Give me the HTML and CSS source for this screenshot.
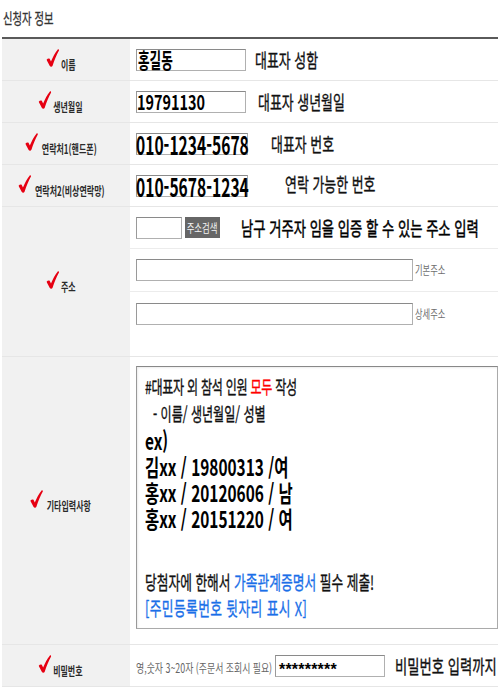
FILE: index.html
```html
<!DOCTYPE html>
<html lang="ko">
<head>
<meta charset="utf-8">
<title>신청자 정보</title>
<link rel="stylesheet" href="styles.css">
</head>
<body>
<div class="page">
  <div class="title"><span class="title-text">신청자 정보</span></div>
  <div class="table">

    <div class="row row-std">
      <div class="lab"><span class="lg"><svg class="chk" viewBox="0 0 12 17" preserveAspectRatio="none"><path d="M0.2 10.2C1.2 9 2.6 8.6 3.3 9.4L4.4 11.8C6.2 7.2 8.2 3.6 10.6 0.6C11.3 -0.1 12.3 0.6 11.9 1.5C9.8 5.4 7.6 10.4 5.9 15.8C5.5 17 3.9 17.1 3.3 16Z"/></svg><span class="lt">이름</span></span></div>
      <div class="val">
        <div class="field w110"><span class="fv v-name">홍길동</span></div>
        <span class="hint m9">대표자 성함</span>
      </div>
    </div>

    <div class="row row-std">
      <div class="lab"><span class="lg"><svg class="chk" viewBox="0 0 12 17" preserveAspectRatio="none"><path d="M0.2 10.2C1.2 9 2.6 8.6 3.3 9.4L4.4 11.8C6.2 7.2 8.2 3.6 10.6 0.6C11.3 -0.1 12.3 0.6 11.9 1.5C9.8 5.4 7.6 10.4 5.9 15.8C5.5 17 3.9 17.1 3.3 16Z"/></svg><span class="lt">생년월일</span></span></div>
      <div class="val">
        <div class="field w110"><span class="fv v-birth">19791130</span></div>
        <span class="hint m12">대표자 생년월일</span>
      </div>
    </div>

    <div class="row row-std">
      <div class="lab"><span class="lg"><svg class="chk" viewBox="0 0 12 17" preserveAspectRatio="none"><path d="M0.2 10.2C1.2 9 2.6 8.6 3.3 9.4L4.4 11.8C6.2 7.2 8.2 3.6 10.6 0.6C11.3 -0.1 12.3 0.6 11.9 1.5C9.8 5.4 7.6 10.4 5.9 15.8C5.5 17 3.9 17.1 3.3 16Z"/></svg><span class="lt lt-gap">연락처1(핸드폰)</span></span></div>
      <div class="val">
        <div class="field w112"><span class="fv v-tel">010-1234-5678</span></div>
        <span class="hint m23">대표자 번호</span>
      </div>
    </div>

    <div class="row row-std">
      <div class="lab"><span class="lg"><svg class="chk" viewBox="0 0 12 17" preserveAspectRatio="none"><path d="M0.2 10.2C1.2 9 2.6 8.6 3.3 9.4L4.4 11.8C6.2 7.2 8.2 3.6 10.6 0.6C11.3 -0.1 12.3 0.6 11.9 1.5C9.8 5.4 7.6 10.4 5.9 15.8C5.5 17 3.9 17.1 3.3 16Z"/></svg><span class="lt lt-gap">연락처2(비상연락망)</span></span></div>
      <div class="val">
        <div class="field w112"><span class="fv v-tel">010-5678-1234</span></div>
        <span class="hint m37 hint-up">연락 가능한 번호</span>
      </div>
    </div>

    <div class="row row-addr">
      <div class="lab"><span class="lg"><svg class="chk" viewBox="0 0 12 17" preserveAspectRatio="none"><path d="M0.2 10.2C1.2 9 2.6 8.6 3.3 9.4L4.4 11.8C6.2 7.2 8.2 3.6 10.6 0.6C11.3 -0.1 12.3 0.6 11.9 1.5C9.8 5.4 7.6 10.4 5.9 15.8C5.5 17 3.9 17.1 3.3 16Z"/></svg><span class="lt">주소</span></span></div>
      <div class="val val-col">
        <div class="sub sub1">
          <div class="field w46"></div>
          <div class="btn"><span class="btn-text">주소검색</span></div>
          <span class="hint hint-big m21">남구 거주자 임을 입증 할 수 있는 주소 입력</span>
        </div>
        <div class="sub sub2">
          <div class="field w277"></div>
          <span class="small m2">기본주소</span>
        </div>
        <div class="sub sub3">
          <div class="field w277"></div>
          <span class="small m2">상세주소</span>
        </div>
      </div>
    </div>

    <div class="row row-memo">
      <div class="lab"><span class="lg"><svg class="chk" viewBox="0 0 12 17" preserveAspectRatio="none"><path d="M0.2 10.2C1.2 9 2.6 8.6 3.3 9.4L4.4 11.8C6.2 7.2 8.2 3.6 10.6 0.6C11.3 -0.1 12.3 0.6 11.9 1.5C9.8 5.4 7.6 10.4 5.9 15.8C5.5 17 3.9 17.1 3.3 16Z"/></svg><span class="lt lt-gap">기타입력사항</span></span></div>
      <div class="val val-top">
        <div class="ta">
          <div class="tx">
            <div class="ln ln1">#대표자 외 참석 인원 <span class="red">모두</span> 작성</div>
            <div class="ln ln2 indent">- 이름/ 생년월일/ 성별</div>
            <div class="ln lnb">ex)</div>
            <div class="ln lnb">김xx / 19800313 /여</div>
            <div class="ln lnb">홍xx / 20120606 / 남</div>
            <div class="ln lnb">홍xx / 20151220 / 여</div>
            <div class="ln lnr gap">당첨자에 한해서 <span class="blue">가족관계증명서</span> 필수 제출!</div>
            <div class="ln lnr blue wide">[주민등록번호 뒷자리 표시 X]</div>
          </div>
        </div>
      </div>
    </div>

    <div class="row row-std">
      <div class="lab"><span class="lg"><svg class="chk" viewBox="0 0 12 17" preserveAspectRatio="none"><path d="M0.2 10.2C1.2 9 2.6 8.6 3.3 9.4L4.4 11.8C6.2 7.2 8.2 3.6 10.6 0.6C11.3 -0.1 12.3 0.6 11.9 1.5C9.8 5.4 7.6 10.4 5.9 15.8C5.5 17 3.9 17.1 3.3 16Z"/></svg><span class="lt">비밀번호</span></span></div>
      <div class="val">
        <div class="note"><span class="note-text">영,숫자 3~20자 (주문서 조회시 필요)</span></div>
        <div class="field w110"><span class="pw">*********</span></div>
        <span class="hint m10 hint-pw">비밀번호 입력까지</span>
      </div>
    </div>

  </div>
</div>
</body>
</html>
```
FILE: styles.css
```css
html, body {
  margin: 0;
  padding: 0;
  background: #fff;
}
body {
  font-family: "Noto Sans CJK KR", "Noto Sans", sans-serif;
  color: #222;
}
.page {
  width: 496px;
  margin-left: 2px;
}
.title {
  height: 37px;
  box-sizing: border-box;
  padding-bottom: 3px;
  display: flex;
  align-items: center;
  padding-left: 1px;
}
.title-text {
  display: inline-block;
  font-size: 15px;
  color: #333;
  white-space: nowrap;
  -webkit-text-stroke: 0.3px #333;
  transform: scaleX(0.69);
  transform-origin: 0 50%;
}
.table {
  border-top: 2px solid #5a5a5a;
}
.row {
  display: flex;
  border-bottom: 1px solid #e6e6e6;
}
.row-std { height: 41px; }
.row-addr { height: 149px; }
.row-memo { height: 287px; }

.lab {
  width: 128px;
  flex: none;
  background: #f1f1f1;
  display: flex;
  align-items: center;
  justify-content: center;
  padding-right: 10px;
  box-sizing: border-box;
}
.lg {
  display: inline-flex;
  align-items: flex-end;
  transform: scaleX(0.64);
  transform-origin: 50% 50%;
  white-space: nowrap;
}
.chk {
  width: 20px;
  height: 18px;
  margin-bottom: 4px;
  fill: #e60012;
  flex: none;
}
.lt {
  font-size: 12.5px;
  line-height: 12px;
  font-weight: 700;
  color: #2a2a2a;
  margin-left: 3px;
}
.lt-gap { margin-left: 6px; }

.val {
  flex: 1;
  display: flex;
  align-items: center;
  padding-left: 6px;
  min-width: 0;
}
.val-col {
  flex-direction: column;
  align-items: stretch;
  padding-left: 0;
}
.val-top {
  align-items: flex-start;
}

.field {
  flex: none;
  height: 22px;
  box-sizing: border-box;
  border: 1px solid #b0b0b0;
  border-top-color: #8a8a8a;
  border-left-color: #9a9a9a;
  background: #fff;
  display: flex;
  align-items: center;
  overflow: visible;
}
.w46 { width: 46px; }
.w110 { width: 110px; }
.w112 { width: 112px; }
.w277 { width: 277px; }

.fv {
  display: inline-block;
  font-weight: 700;
  color: #000;
  white-space: nowrap;
  line-height: 1;
  transform-origin: 0 50%;
}
.v-name {
  font-size: 21px;
  transform: scaleX(0.6);
  margin-left: 1px;
}
.v-birth {
  font-size: 20px;
  transform: scaleX(0.72);
}
.v-tel {
  font-size: 26px;
  transform: scaleX(0.6);
  margin-left: -1px;
}
.pw {
  font-family: "Liberation Sans", Arial, sans-serif;
  font-weight: 700;
  font-size: 16px;
  line-height: 20px;
  padding-top: 8px;
  margin-left: 3px;
  color: #000;
  letter-spacing: 0.2px;
}

.hint {
  display: inline-block;
  font-size: 19px;
  line-height: 22px;
  color: #111;
  -webkit-text-stroke: 0.35px #111;
  white-space: nowrap;
  transform: scaleX(0.68);
  transform-origin: 0 50%;
}
.hint-big { transform: scaleX(0.7); color: #000; -webkit-text-stroke: 0.5px #000; }
.hint-pw { transform: scaleX(0.7); }
.hint-up { margin-bottom: 4px; }
.m2 { margin-left: 2px; }
.m9 { margin-left: 9px; }
.m10 { margin-left: 10px; }
.m12 { margin-left: 12px; }
.m21 { margin-left: 21px; }
.m23 { margin-left: 23px; }
.m37 { margin-left: 37px; }

.sub {
  display: flex;
  align-items: center;
  padding-left: 6px;
}
.sub1 {
  height: 41px;
  border-bottom: 1px solid #ececec;
}
.sub2 {
  height: 42px;
  border-bottom: 1px solid #ececec;
}
.sub3 {
  flex: 1;
  align-items: flex-start;
  padding-top: 11px;
}
.sub3 .small { margin-top: 3px; }

.btn {
  flex: none;
  width: 35px;
  height: 21px;
  margin-left: 3px;
  background: #666;
  display: flex;
  align-items: center;
  justify-content: center;
}
.btn-text {
  display: inline-block;
  font-size: 12px;
  line-height: 14px;
  color: #f4f4f4;
  white-space: nowrap;
  transform: scaleX(0.7);
  transform-origin: 50% 50%;
}
.small {
  display: inline-block;
  font-size: 12.5px;
  line-height: 16px;
  color: #6e6e6e;
  white-space: nowrap;
  transform: scaleX(0.66);
  transform-origin: 0 50%;
}

.note {
  width: 139px;
  flex: none;
  overflow: visible;
}
.note-text {
  display: inline-block;
  font-size: 12.5px;
  line-height: 16px;
  color: #666;
  white-space: nowrap;
  transform: scaleX(0.71);
  transform-origin: 0 50%;
}

.ta {
  margin-top: 9px;
  width: 362px;
  height: 263px;
  box-sizing: border-box;
  border: 1px solid #aaa;
  border-top-color: #888;
  border-left-color: #999;
  box-shadow: inset 1px 1px 2px rgba(0, 0, 0, 0.08);
  padding: 5px 0 0 8px;
  overflow: hidden;
  background: #fff;
}
.tx {
  width: 150%;
  white-space: nowrap;
  color: #111;
  transform: scaleX(0.67);
  transform-origin: 0 0;
}
.ln { white-space: nowrap; }
.ln1, .ln2, .lnr { -webkit-text-stroke: 0.35px currentColor; }
.ln1 {
  font-size: 18px;
  letter-spacing: -0.4px;
  height: 28px;
  line-height: 28px;
}
.ln2 {
  font-size: 18px;
  height: 27px;
  line-height: 27px;
}
.indent { padding-left: 12px; }
.lnb {
  font-size: 23px;
  font-weight: 700;
  height: 26px;
  line-height: 26px;
  color: #000;
}
.lnr {
  font-size: 19px;
  height: 26px;
  line-height: 26px;
}
.wide { letter-spacing: 0.6px; }
.gap { margin-top: 38px; }
.red { color: #f00; }
.blue { color: #1a6fe8; }
```
